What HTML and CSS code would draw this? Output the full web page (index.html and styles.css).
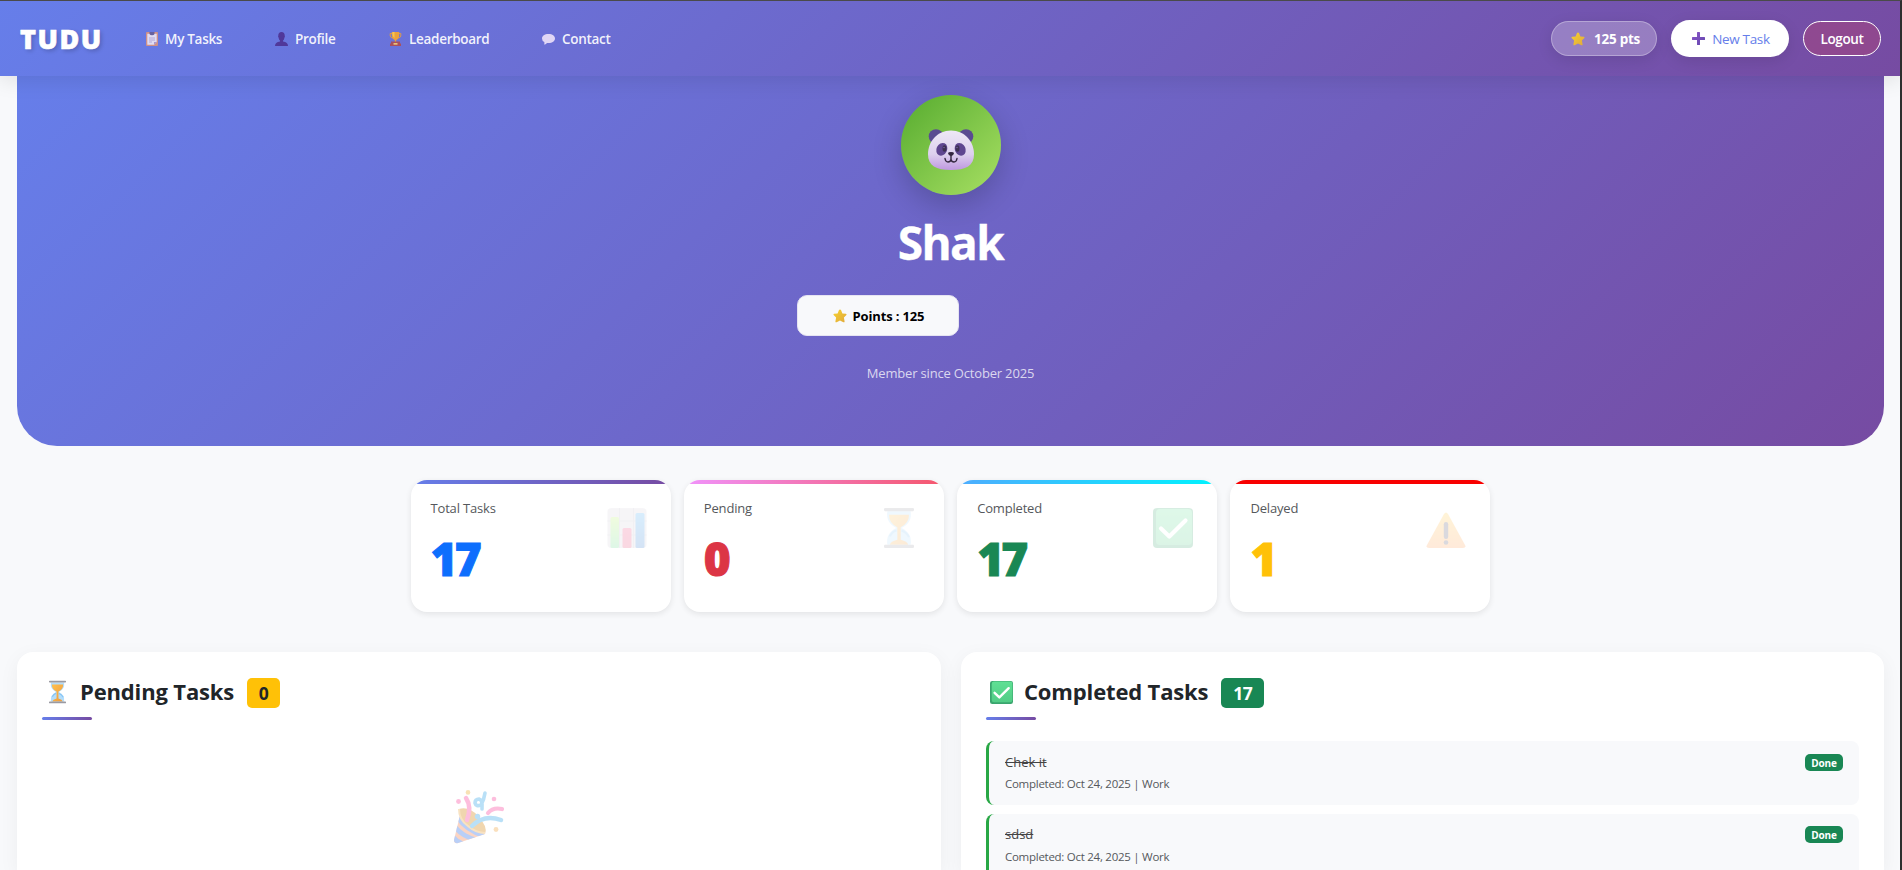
FILE: index.html
```
<!DOCTYPE html>
<html lang="en">
<head>
<meta charset="utf-8">
<title>TUDU - Profile</title>
<link rel="stylesheet" href="styles.css">
</head>
<body>
<svg class="defs" width="0" height="0" aria-hidden="true">
  <defs>
    <linearGradient id="gold" x1="0" y1="0" x2="1" y2="1"><stop offset="0" stop-color="#f7d22f"/><stop offset="1" stop-color="#e0a83c"/></linearGradient>
    <linearGradient id="purple" x1="0" y1="0" x2="1" y2="1"><stop offset="0" stop-color="#8a55c8"/><stop offset="1" stop-color="#6448ae"/></linearGradient>
    <linearGradient id="face" x1="0" y1="0" x2="0" y2="1"><stop offset="0" stop-color="#eee8f6"/><stop offset=".6" stop-color="#ddd0ee"/><stop offset="1" stop-color="#bf98e0"/></linearGradient>
    <linearGradient id="sand" x1="0" y1="0" x2="1" y2="1"><stop offset="0" stop-color="#ffc04e"/><stop offset="1" stop-color="#ee9b3c"/></linearGradient>
    <linearGradient id="green" x1="0" y1="0" x2="0" y2="1"><stop offset="0" stop-color="#5fe094"/><stop offset="1" stop-color="#52cc86"/></linearGradient>
    <linearGradient id="warn" x1="0" y1="0" x2="0" y2="1"><stop offset="0" stop-color="#ffc93c"/><stop offset="1" stop-color="#ff9a4c"/></linearGradient>
    <linearGradient id="barG" x1="0" y1="0" x2="0" y2="1"><stop offset="0" stop-color="#b6ef62"/><stop offset="1" stop-color="#5fd98a"/></linearGradient>
    <linearGradient id="barB" x1="0" y1="0" x2="0" y2="1"><stop offset="0" stop-color="#3fa9f5"/><stop offset="1" stop-color="#2f78d0"/></linearGradient>
    <linearGradient id="barR" x1="0" y1="0" x2="0" y2="1"><stop offset="0" stop-color="#f0457f"/><stop offset="1" stop-color="#e63f6f"/></linearGradient>
    <clipPath id="coneClip"><path d="M7 21L0 50Q0 54 4 53L31 44Q33 40 27 34L13 21Q9 18 7 21Z"/></clipPath>
    <symbol id="i-star" viewBox="0 0 14 14"><path d="M7 .4Q7.7.4 8 1.1L9.4 4.4 12.9 4.8Q14 5 13.4 6L10.9 8.6 11.6 12.4Q11.6 13.7 10.4 13.2L7 11.5 3.6 13.2Q2.4 13.7 2.4 12.4L3.1 8.6.6 6Q0 5 1.1 4.8L4.6 4.4 6 1.1Q6.3.4 7 .4Z" fill="url(#gold)"/></symbol>
    <symbol id="i-hourglass" viewBox="0 0 18 24">
      <path d="M2 2H16Q17 9 10.500 12Q17 15 16 22H2Q1 15 7.500 12Q1 9 2 2Z" fill="#b3ddfb"/>
      <path d="M3 4H15Q15 9 10 11.500V19Q14 20 14.600 22H3.400Q4 20 8 19V11.500Q3 9 3 4Z" fill="url(#sand)"/>
      <path d="M3.500 17Q5 14 7.500 13.500M10.500 13.500Q13.500 14.500 15 17.500" fill="none" stroke="#86c4f4" stroke-width="1.200"/>
      <rect width="18" height="1.900" rx=".7" fill="#9a9aa2"/><rect y="22.100" width="18" height="1.900" rx=".7" fill="#9a9aa2"/>
    </symbol>
    <symbol id="i-check" viewBox="0 0 40 40">
      <rect width="40" height="40" rx="4" fill="#3aa56e"/><rect x="3" y="1" width="36" height="36" rx="4" fill="url(#green)"/>
      <path d="M8 20.500L16.300 28.500 32.500 12.500" fill="none" stroke="#fff" stroke-width="4.200" stroke-linecap="round" stroke-linejoin="round"/>
    </symbol>
  </defs>
</svg>
<header class="navbar">
  <a class="brand">TUDU</a>
  <nav class="links">
    <a class="link l1"><svg class="ico clip" viewBox="0 0 12 14"><rect width="12" height="14" rx="1" fill="#cf9187"/><path d="M1.300 1.800H10.700V10L8 12.800H1.300Z" fill="#e0dcf3"/><path d="M10.700 10H8V12.800Z" fill="#a795cf"/><path d="M3.500 0H8.500V2Q8 3.200 6 3.200T3.500 2Z" fill="#66619f"/><path d="M3 6H9M3 8H9M3 10H6" stroke="#a49bd0" stroke-width=".8"/></svg><span class="t">My Tasks</span></a>
    <a class="link l2"><svg class="ico" viewBox="0 0 13 14"><path d="M6.500 0Q9.700 0 9.700 3.500Q10.300 4.300 9.500 5.500Q9 8 8 8.500V9.500Q13 10.300 13 14H0Q0 10.300 5 9.500V8.500Q4 8 3.500 5.500Q2.700 4.300 3.300 3.500Q3.300 0 6.500 0Z" fill="#50389a"/></svg><span class="t">Profile</span></a>
    <a class="link l3"><svg class="ico" viewBox="0 0 12 14"><path d="M2.500 1.500H.7V4Q1 6 4 6M9.500 1.500H11.300V4Q11 6 8 6" fill="none" stroke="#dc9a4c" stroke-width="1"/><path d="M2.300 0H9.700V4Q9 7.500 6.700 8V10H5.300V8Q3 7.500 2.300 4Z" fill="#eba23d"/><path d="M3 0H5V6Q3.500 5 3 3Z" fill="#f6c653"/><path d="M1.500 9.500H10.500V11L11.500 12V14H.5V12L1.500 11Z" fill="#a9505c"/><rect x="4" y="11" width="4" height="1.700" fill="#e8c27a"/></svg><span class="t">Leaderboard</span></a>
    <a class="link l4"><svg class="ico" viewBox="0 0 13 14"><path d="M6.500 2C10.500 2 13 4 13 6.500S10.500 11 6.500 11Q5.700 11 5 10.900Q3.800 12.400 2 12.500Q2.700 11.200 2.300 10Q0 8.800 0 6.500C0 4 2.500 2 6.500 2Z" fill="#e0d6f5"/></svg><span class="t">Contact</span></a>
  </nav>
  <div class="actions">
    <span class="pill pts"><svg class="star"><use href="#i-star"/></svg><span class="t">125 pts</span></span>
    <a class="pill new"><svg class="plus" viewBox="0 0 13 13"><path d="M5 .6Q5 0 5.600 0H7.400Q8 0 8 .6V5H12.400Q13 5 13 5.600V7.400Q13 8 12.400 8H8V12.400Q8 13 7.400 13H5.600Q5 13 5 12.400V8H.6Q0 8 0 7.400V5.600Q0 5 .6 5H5Z" fill="url(#purple)"/></svg><span class="t">New Task</span></a>
    <a class="pill logout"><span class="t">Logout</span></a>
  </div>
</header>
<main class="page">
  <section class="hero">
    <div class="avatar">
      <svg viewBox="0 0 46 41"><circle cx="8" cy="7.500" r="7.300" fill="#5a4b91"/><circle cx="38" cy="7.500" r="7.300" fill="#5a4b91"/><path d="M23 1.500C37 1.500 46 13 46 25C46 37 38 41 23 41S0 37 0 25C0 13 9 1.500 23 1.500Z" fill="url(#face)"/><ellipse cx="13.800" cy="20.300" rx="5.300" ry="6.600" transform="rotate(25 13.800 20.300)" fill="#5f4690"/><ellipse cx="32.200" cy="20.300" rx="5.300" ry="6.600" transform="rotate(-25 32.200 20.300)" fill="#5f4690"/><ellipse cx="16.500" cy="19.500" rx="2" ry="3.200" fill="#3d2f52"/><ellipse cx="29.500" cy="19.500" rx="2" ry="3.200" fill="#3d2f52"/><circle cx="16" cy="18.500" r=".7" fill="#7d6aab"/><circle cx="29" cy="18.500" r=".7" fill="#7d6aab"/><path d="M20 24.200Q20 23 23 23T26 24.200Q25.500 26.800 23 27.300Q20.500 26.800 20 24.200Z" fill="#33263f"/><path d="M23 27V31M17 29.500Q17.500 33 20 33T23 30.500Q23.500 33 26 33T29 29.500" fill="none" stroke="#33263f" stroke-width="1.400" stroke-linecap="round"/></svg>
    </div>
    <h1 class="name">Shak</h1>
    <div class="points"><svg class="star"><use href="#i-star"/></svg><span class="t">Points : 125</span></div>
    <p class="since">Member since October 2025</p>
  </section>
  <section class="stats">
    <article class="stat total"><div><p class="label">Total Tasks</p><p class="num">17</p></div>
      <svg class="pic" viewBox="0 0 39 40"><rect width="39" height="40" rx="4" fill="#d5d2dc"/><path d="M0 13H39M0 27H39M12 0V40M26 0V40" stroke="#bbb6c6"/><rect x="3" y="9" width="8.500" height="31" rx="1.500" fill="url(#barG)"/><rect x="15" y="20" width="9" height="20" rx="1.500" fill="url(#barR)"/><rect x="28" y="5" width="9" height="35" rx="1.500" fill="url(#barB)"/></svg></article>
    <article class="stat pending"><div><p class="label">Pending</p><p class="num">0</p></div>
      <svg class="pic glass"><use href="#i-hourglass"/></svg></article>
    <article class="stat completed"><div><p class="label">Completed</p><p class="num">17</p></div>
      <svg class="pic"><use href="#i-check"/></svg></article>
    <article class="stat delayed"><div><p class="label">Delayed</p><p class="num">1</p></div>
      <svg class="pic" viewBox="0 0 39 40"><path d="M17.500 6Q19.500 3 21.500 6L38.500 37Q40 40 36.500 40H2.500Q-1 40 .5 37Z" fill="url(#warn)"/><rect x="17.300" y="14" width="4.400" height="17" rx="2.200" fill="#4b4560"/><circle cx="19.500" cy="34.500" r="2.300" fill="#4b4560"/></svg></article>
  </section>
  <section class="panels">
    <div class="panel">
      <h2 class="title"><svg class="glass2"><use href="#i-hourglass"/></svg><span class="t">Pending Tasks</span><span class="count yellow">0</span></h2>
      <div class="empty"><svg class="party" viewBox="0 0 51 54"><path d="M7 21L0 50Q0 54 4 53L31 44Q33 40 27 34L13 21Q9 18 7 21Z" fill="#f3956b"/><g clip-path="url(#coneClip)" fill="none" stroke="#5389ed" stroke-width="4.600"><path d="M4 28Q12 40 30 46M1 37Q8 46 22 50M-1 47Q3 52 9 54"/></g><path d="M5 19Q15 16 24 26Q34 37 31 43Q21 43 13 36Q5 28 5 19Z" fill="#dc9b39"/><path d="M5 19Q5 30 14 36Q22 43 31 43" fill="none" stroke="#f0b968" stroke-width="2"/><path d="M12 8Q18 17 13 30" fill="none" stroke="#fb5fab" stroke-width="4.500" stroke-linecap="round"/><path d="M18 36Q30 24 47 30" fill="none" stroke="#52b3ec" stroke-width="4.500" stroke-linecap="round"/><path d="M34 23Q39 17 48 19" fill="none" stroke="#fb5fab" stroke-width="4.200" stroke-linecap="round"/><path d="M31 3Q30 10 27 15Q22 17 21 13Q21 9 25 9Q29 10 28 19" fill="none" stroke="#52b3ec" stroke-width="3.600" stroke-linecap="round"/><circle cx="4.500" cy="11.500" r="2.400" fill="#fb5fab"/><circle cx="14" cy="2.400" r="2.300" fill="#efb947"/><circle cx="40" cy="9" r="2.300" fill="#fb5fab"/><circle cx="23.500" cy="26.500" r="2.700" fill="#52b3ec"/><circle cx="42" cy="39.500" r="2.400" fill="#f3b25d"/></svg></div>
    </div>
    <div class="panel">
      <h2 class="title"><svg class="check2"><use href="#i-check"/></svg><span class="t">Completed Tasks</span><span class="count dark">17</span></h2>
      <ul class="list">
        <li class="item"><div><p class="task">Chek it</p><p class="meta">Completed: Oct 24, 2025 | Work</p></div><span class="done">Done</span></li>
        <li class="item"><div><p class="task">sdsd</p><p class="meta">Completed: Oct 24, 2025 | Work</p></div><span class="done">Done</span></li>
      </ul>
    </div>
  </section>
</main>
</body>
</html>
```
FILE: styles.css
```
* { box-sizing: border-box; }
body {
  margin: 0;
  height: 870px;
  overflow: hidden;
  font-family: "Open Sans", "Noto Sans", sans-serif;
  background: #f8f9fb;
  border-top: 1px solid #4a4a4a;
  border-right: 2px solid #2e2e2e;
  color: #212529;
}
h1, h2, p, ul { margin: 0; padding: 0; }
svg { display: block; flex: none; }
.defs { position: absolute; }
.t, .meta { white-space: nowrap; }

.navbar {
  position: relative;
  z-index: 2;
  display: flex;
  align-items: center;
  height: 75px;
  padding: 0 19px 0 20px;
  background: linear-gradient(135deg, #667eea 0%, #764ba2 100%);
  box-shadow: 0 4px 20px rgba(0, 0, 0, .1);
}
.brand {
  width: 126px;
  color: #fff;
  font-size: 27px;
  font-weight: 800;
  line-height: 40px;
  letter-spacing: 1.500px;
  -webkit-text-stroke: .6px #fff;
  text-shadow: 2px 2px 4px rgba(0, 0, 0, .2);
}
.links { display: flex; flex: 1; }
.link {
  display: flex;
  align-items: center;
  gap: 7px;
  color: rgba(255, 255, 255, .92);
  font-size: 13.5px;
  font-weight: 600;
  letter-spacing: -.3px;
}
.l1 { width: 129px; }
.l2 { width: 114px; }
.l3 { width: 153px; }
.ico { width: 13px; height: 14px; }
.clip { width: 12px; }
.actions { display: flex; align-items: center; gap: 14px; }
.pill {
  display: flex;
  align-items: center;
  justify-content: center;
  height: 35px;
  border-radius: 25px;
  font-size: 13.5px;
  font-weight: 600;
  letter-spacing: -.35px;
}
.star { width: 14px; height: 14px; }
.plus { width: 13px; height: 13px; }
.pts { width: 106px; padding-left: 3px; gap: 9px; color: #fff; font-weight: 700; letter-spacing: -.25px; background: rgba(255, 255, 255, .25); border: 1px solid rgba(255, 255, 255, .3); box-shadow: 0 4px 15px rgba(0, 0, 0, .1); }
.new { width: 118px; height: 37px; padding-left: 2px; gap: 7px; color: #667eea; font-weight: 500; background: #fff; box-shadow: 0 4px 15px rgba(0, 0, 0, .1); }
.logout { width: 78px; color: #fff; background: rgba(160, 70, 130, .6); border: 1px solid #fff; }

.page { padding: 0 16px 0 17px; }
.hero {
  display: flex;
  flex-direction: column;
  align-items: center;
  height: 370px;
  padding-top: 19px;
  border-radius: 0 0 40px 40px;
  background: linear-gradient(135deg, #667eea 0%, #764ba2 100%);
  color: #fff;
}
.avatar {
  display: flex;
  align-items: center;
  justify-content: center;
  width: 100px;
  height: 100px;
  padding-top: 9px;
  border-radius: 50%;
  background: linear-gradient(135deg, #56ab2f, #a8e063);
  box-shadow: 0 10px 30px rgba(0, 0, 0, .2);
}
.avatar svg { width: 46px; height: 41px; }
.name { margin-top: 17px; font-size: 46px; font-weight: 700; line-height: 60px; letter-spacing: -1.600px; -webkit-text-stroke: .3px #fff; }
.points {
  display: flex;
  align-items: center;
  justify-content: center;
  gap: 6px;
  width: 162px;
  height: 41px;
  margin: 23px 146px 0 0;
  padding-left: 2px;
  border-radius: 10px;
  background: #f8f9fb;
  border: 1px solid #e6e4f2;
  color: #000;
  font-size: 13px;
  font-weight: 700;
  letter-spacing: -.15px;
}
.since { margin-top: 26px; font-size: 13px; line-height: 22px; letter-spacing: -.18px; font-weight: 500; color: rgba(255, 255, 255, .75); }

.stats { display: grid; grid-template-columns: repeat(4, 260px); gap: 13.300px; justify-content: center; padding-top: 34px; }
.stat {
  position: relative;
  display: flex;
  justify-content: space-between;
  height: 132px;
  padding: 17px 24px 0 20px;
  border-radius: 16px;
  background: #fff;
  box-shadow: 0 2px 6px rgba(0, 0, 0, .09);
  overflow: hidden;
}
.stat::before { content: ""; position: absolute; inset: 0 0 auto 0; height: 4px; background: linear-gradient(90deg, #667eea, #764ba2); }
.pending::before { background: linear-gradient(90deg, #f093fb, #f5576c); }
.completed::before { background: linear-gradient(90deg, #4facfe, #00f2fe); }
.delayed::before { background: #f80000; }
.label { font-size: 13px; line-height: 23px; letter-spacing: -.18px; color: #55585c; font-weight: 500; }
.num { margin-top: 8px; font-size: 46px; line-height: 60px; font-weight: 800; letter-spacing: -2.800px; color: #0d6efd; -webkit-text-stroke: 1px currentColor; }
.pending .num { color: #dc3545; }
.completed .num { color: #198754; }
.delayed .num { color: #ffc107; }
.pic { width: 40px; height: 40px; margin-top: 11px; opacity: .2; }
.glass { width: 30px; margin-right: 6px; }

.panels { display: grid; grid-template-columns: 924px 923px; gap: 20px; padding-top: 40px; }
.panel { height: 218px; padding: 25px 25px 0; overflow: hidden; border-radius: 16px 16px 0 0; background: #fff; box-shadow: 0 5px 20px rgba(0, 0, 0, .05); }
.title { position: relative; display: flex; align-items: center; height: 43px; padding: 0 0 12px 4px; font-size: 22px; font-weight: 700; letter-spacing: -.15px; }
.title .t { margin-top: -4px; }
.title::after { content: ""; position: absolute; left: 0; bottom: 0; width: 50px; height: 3px; border-radius: 2px; background: linear-gradient(90deg, #667eea, #764ba2); }
.glass2 { width: 17px; height: 24px; margin: -2px 14px 0 3px; }
.check2 { width: 23px; height: 23px; margin: -1px 11px 0 0; }
.count { display: flex; align-items: center; justify-content: center; height: 30px; margin-left: 13px; border-radius: 5px; font-size: 17.500px; font-weight: 700; letter-spacing: -.3px; }
.yellow { width: 33px; background: #ffc107; }
.dark { width: 43px; background: #198754; color: #fff; }
.empty { display: flex; justify-content: center; padding-top: 70px; opacity: .4; }
.party { width: 51px; height: 54px; }
.list { display: flex; flex-direction: column; gap: 9px; padding-top: 21px; list-style: none; }
.item { display: flex; justify-content: space-between; flex: none; height: 64px; padding: 11px 16px 0; border-left: 3px solid #28a745; border-radius: 8px; background: #f8f9fb; }
.item + .item { padding-top: 10px; }
.item + .item .meta { margin-top: 1px; }
.task { font-size: 13px; line-height: 20px; color: #444; text-decoration: line-through; font-weight: 500; }
.meta { padding-top: 1px; font-size: 11.5px; line-height: 22px; letter-spacing: -.27px; color: #55585c; }
.done { display: flex; align-items: center; justify-content: center; width: 38px; height: 17px; margin-top: 2px; border-radius: 5px; background: #198754; color: #fff; font-size: 10px; font-weight: 700; letter-spacing: -.1px; }
```
